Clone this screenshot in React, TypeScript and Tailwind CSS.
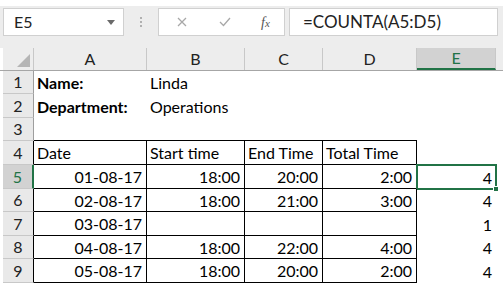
import React from "react";

const FONT = { fontFamily: "Lato, 'Noto Sans', sans-serif" };

type Cell = { t?: string; b?: boolean; r?: boolean };
type Row = { n: number; h: string; cells: Cell[]; table: boolean; top: boolean };

const rows: Row[] = [
  { n: 1, h: "h-[23px]", table: false, top: false, cells: [{ t: "Name:", b: true }, { t: "Linda" }, {}, {}, {}] },
  { n: 2, h: "h-[24px]", table: false, top: false, cells: [{ t: "Department:", b: true }, { t: "Operations" }, {}, {}, {}] },
  { n: 3, h: "h-[23px]", table: false, top: true, cells: [{}, {}, {}, {}, {}] },
  { n: 4, h: "h-[24px]", table: true, top: false, cells: [{ t: "Date" }, { t: "Start time" }, { t: "End Time" }, { t: "Total Time" }, {}] },
  { n: 5, h: "h-[24px]", table: true, top: false, cells: [{ t: "01-08-17", r: true }, { t: "18:00", r: true }, { t: "20:00", r: true }, { t: "2:00", r: true }, { t: "4", r: true }] },
  { n: 6, h: "h-[23px]", table: true, top: false, cells: [{ t: "02-08-17", r: true }, { t: "18:00", r: true }, { t: "21:00", r: true }, { t: "3:00", r: true }, { t: "4", r: true }] },
  { n: 7, h: "h-[24px]", table: true, top: false, cells: [{ t: "03-08-17", r: true }, {}, {}, {}, { t: "1", r: true }] },
  { n: 8, h: "h-[23px]", table: true, top: false, cells: [{ t: "04-08-17", r: true }, { t: "18:00", r: true }, { t: "22:00", r: true }, { t: "4:00", r: true }, { t: "4", r: true }] },
  { n: 9, h: "h-[24px]", table: true, top: false, cells: [{ t: "05-08-17", r: true }, { t: "18:00", r: true }, { t: "20:00", r: true }, { t: "2:00", r: true }, { t: "4", r: true }] },
];

const widths = ["w-[113px]", "w-[98px]", "w-[78px]", "w-[94px]", "w-[79px]"];
const letters = ["A", "B", "C", "D", "E"];

function RowHeader({ row }: { row: Row }) {
  const sel = row.n === 5;
  const rightCls = sel
    ? "border-r-2 border-r-[#217346]"
    : row.table
    ? "border-r border-r-black"
    : "border-r border-r-[#9e9e9e]";
  return (
    <div
      className={`w-[31px] shrink-0 flex items-center justify-center border-b border-b-[#c8c8c8] text-[16px] ${rightCls} ${
        sel ? "bg-[#d2d2d2] text-[#217346]" : "bg-[#e9e9e9] text-[#222]"
      }`}
    >
      {row.n}
    </div>
  );
}

function DataCell({ row, c, i }: { row: Row; c: Cell; i: number }) {
  const inTable = row.table && i < 4;
  const topEdge = row.top && i < 4;
  const border = inTable
    ? "border-r border-b border-black"
    : topEdge
    ? "border-b border-b-black"
    : "";
  const isSel = row.n === 5 && i === 4;
  return (
    <div
      className={`${widths[i]} shrink-0 relative flex items-center pl-[3px] pr-[4px] leading-[23px] whitespace-nowrap text-[16px] text-black ${border} ${
        c.r ? "justify-end" : "justify-start"
      } ${c.b ? "font-bold" : ""}`}
    >
      {c.t ?? ""}
      {isSel && (
        <>
          <div className="absolute -left-[1px] -top-[1px] -right-[1px] -bottom-[1px] border-2 border-[#217346] pointer-events-none" />
          <div className="absolute -right-[3px] -bottom-[3px] w-[6px] h-[6px] bg-[#217346] border border-white" />
        </>
      )}
    </div>
  );
}

export default function App() {
  return (
    <div className="w-[503px] h-[295px] bg-white overflow-hidden" style={FONT}>
      <div className="h-[6px] bg-white" />
      {/* formula bar area */}
      <div className="h-[42px] bg-[#ededed] pl-[3px] pr-[5px] pt-[2px]">
        <div className="flex h-[28px] items-stretch">
          <div className="w-[121px] bg-white border border-[#d0d0d0] flex items-center justify-between pl-[10px] pr-[8px]">
            <span className="text-[16px] text-[#222]">E5</span>
            <svg width="8" height="5" viewBox="0 0 8 5">
              <path d="M0 0 L8 0 L4 5 Z" fill="#6a6a6a" />
            </svg>
          </div>
          <div className="w-[34px] flex items-center justify-center">
            <div className="flex flex-col gap-[2px]">
              <div className="w-[2px] h-[2px] bg-[#b0b0b0]" />
              <div className="w-[2px] h-[2px] bg-[#b0b0b0]" />
              <div className="w-[2px] h-[2px] bg-[#b0b0b0]" />
            </div>
          </div>
          <div className="w-[127px] bg-white border border-[#d0d0d0] flex items-center">
            <svg className="ml-[18px]" width="10" height="10" viewBox="0 0 10 10">
              <path d="M1 1 L9 9 M9 1 L1 9" stroke="#a8a8a8" strokeWidth="1.3" />
            </svg>
            <svg className="ml-[32px]" width="12" height="10" viewBox="0 0 12 10">
              <path d="M1 5 L4.5 8.5 L11 1" stroke="#a8a8a8" strokeWidth="1.3" fill="none" />
            </svg>
            <span
              className="ml-[30px] text-[14px] italic text-[#555]"
              style={{ fontFamily: "'Liberation Serif', serif" }}
            >
              f<span className="text-[11px]">x</span>
            </span>
          </div>
          <div className="w-[4px]" />
          <div className="w-[209px] bg-white border border-[#d0d0d0] flex items-center pl-[13px]">
            <span className="text-[17px] text-[#222]">=COUNTA(A5:D5)</span>
          </div>
        </div>
      </div>
      {/* column headers */}
      <div className="flex h-[23px] bg-[#ededed] border-b border-b-[#a6a6a6]">
        <div className="w-[3px] bg-white" />
        <div className="w-[31px] shrink-0 relative border-r border-r-[#c8c8c8]">
          <svg className="absolute right-[3px] bottom-[3px]" width="13" height="13" viewBox="0 0 13 13">
            <path d="M13 0 L13 13 L0 13 Z" fill="#b5b5b5" />
          </svg>
        </div>
        {letters.map((l, i) =>
          l === "E" ? (
            <div
              key={l}
              className={`${widths[i]} shrink-0 flex items-center justify-center bg-[#d2d2d2] text-[#217346] text-[16px] border-b-2 border-b-[#217346] border-r border-r-[#c8c8c8]`}
            >
              {l}
            </div>
          ) : (
            <div
              key={l}
              className={`${widths[i]} shrink-0 flex items-center justify-center text-[#222] text-[16px] border-r border-r-[#c8c8c8]`}
            >
              {l}
            </div>
          )
        )}
        <div className="flex-1" />
      </div>
      {/* rows */}
      {rows.map((row) => (
        <div key={row.n} className={`flex ${row.h}`}>
          <div className="w-[3px] bg-white" />
          <RowHeader row={row} />
          {row.cells.map((c, i) => (
            <DataCell key={i} row={row} c={c} i={i} />
          ))}
        </div>
      ))}
    </div>
  );
}
